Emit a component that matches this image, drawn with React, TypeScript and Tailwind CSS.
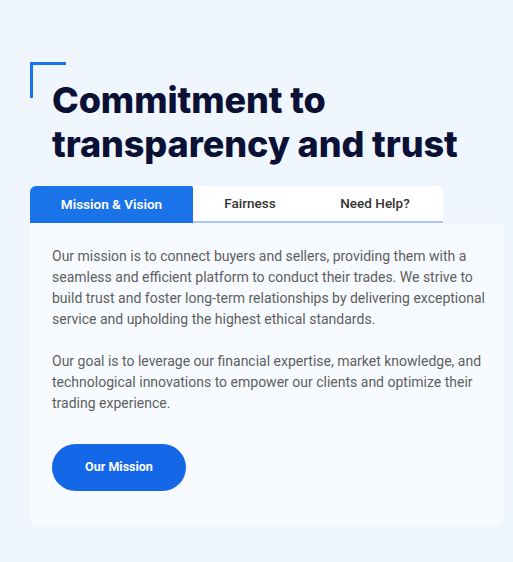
import React, { useState } from 'react';

const tabs = ['Mission & Vision', 'Fairness', 'Need Help?'];

export default function App() {
  const [active, setActive] = useState(0);

  return (
    <div
      className="min-h-[562px] w-full bg-[#f0f6fe] pt-[62px] pl-[30px] pr-[9px]"
      style={{ fontFamily: 'Roboto, "Noto Sans", sans-serif' }}
    >
      <div className="relative pl-[22px] pt-[16px]">
        <span className="absolute left-0 top-0 h-[36px] w-[36px] border-l-[3px] border-t-[3px] border-[#1a73e8]" />
        <h2
          className="text-[36px] font-extrabold leading-[44px] tracking-[-0.1px] text-[#0b1035]"
          style={{ fontFamily: 'Inter, sans-serif' }}
        >
          Commitment to
          <br />
          transparency and trust
        </h2>
      </div>

      <div className="mt-[20px] flex">
        {tabs.map((tab, i) => (
          <button
            key={tab}
            onClick={() => setActive(i)}
            className={
              i === active
                ? 'h-[37px] w-[163px] rounded-tl-[6px] rounded-tr-[2px] bg-[#1a73e8] text-[13.5px] font-semibold text-white'
                : i === 1
                ? 'h-[37px] w-[114px] border-b-2 border-[#a9c7f5] bg-white text-[13.5px] font-medium text-[#333]'
                : 'h-[37px] w-[136px] rounded-tr-[4px] border-b-2 border-[#a9c7f5] bg-white text-[13.5px] font-medium text-[#333]'
            }
          >
            {tab}
          </button>
        ))}
      </div>

      <div className="h-[302px] rounded-b-[8px] rounded-tr-[8px] bg-[#f7fbff] pl-[22px] pr-[14px] pt-[23px]">
        <p className="text-[14px] leading-[21px] text-[#5e5e5e]">
          Our mission is to connect buyers and sellers, providing them with a seamless and efficient platform to
          conduct their trades. We strive to build trust and foster long-term relationships by delivering
          exceptional service and upholding the highest ethical standards.
        </p>
        <p className="mt-[21px] pr-[8px] text-[14px] leading-[21px] text-[#5e5e5e]">
          Our goal is to leverage our financial expertise, market knowledge, and technological innovations to
          empower our clients and optimize their trading experience.
        </p>
        <button className="mt-[30px] h-[47px] w-[134px] rounded-full bg-[#1467e6] text-[12.5px] font-bold text-white">
          Our Mission
        </button>
      </div>
    </div>
  );
}
